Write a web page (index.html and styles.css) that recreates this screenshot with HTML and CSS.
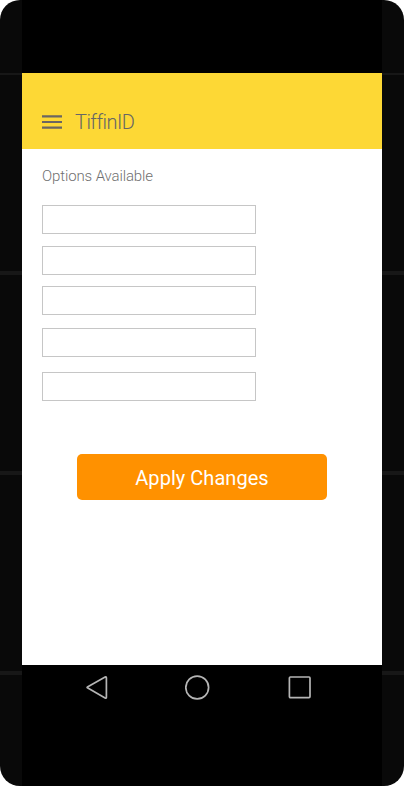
FILE: index.html
```html
<!DOCTYPE html>
<html lang="en">
<head>
<meta charset="utf-8">
<title>TiffinID</title>
<link rel="stylesheet" href="styles.css">
</head>
<body>
<div class="phone">
  <div class="display">
    <main class="screen">
      <header class="app-bar">
        <svg class="menu" width="20" height="14" viewBox="0 0 20 14"><path d="M0 1.4h20M0 7h20M0 12.6h20" stroke="#6b6662" stroke-width="2.2"/></svg>
        <h1 class="title">TiffinID</h1>
      </header>
      <form class="options">
        <h2 class="label">Options Available</h2>
        <input class="field" type="text">
        <input class="field" type="text">
        <input class="field" type="text">
        <input class="field field-fourth" type="text">
        <input class="field field-last" type="text">
        <button class="apply" type="button">Apply Changes</button>
      </form>
    </main>
    <nav class="nav">
      <svg width="24" height="28" viewBox="0 0 24 28"><path d="M2.4 13.1 20.1 3Q21.4 2.5 21.4 4V23.2Q21.4 24.6 20.1 24L2.4 13.8Q1.8 13.4 2.4 13.1Z"/></svg>
      <svg width="26" height="28" viewBox="0 0 26 28"><circle cx="12.2" cy="13.5" r="11.4"/></svg>
      <svg width="24" height="28" viewBox="0 0 24 28"><rect x="2.4" y="3" width="20.6" height="20.6" rx="1"/></svg>
    </nav>
  </div>
</div>
</body>
</html>
```
FILE: styles.css
```css
* { box-sizing: border-box; }
body {
  margin: 0;
  background: #fff;
  font-family: Roboto, sans-serif;
}
.phone {
  width: 404px;
  height: 786px;
  padding: 0 22px;
  border-radius: 20px;
  overflow: hidden;
  background:
    linear-gradient(#171717, #171717) 0 73px / 100% 2px no-repeat,
    linear-gradient(#171717, #171717) 0 271px / 100% 4px no-repeat,
    linear-gradient(#171717, #171717) 0 471px / 100% 4px no-repeat,
    linear-gradient(#171717, #171717) 0 671px / 100% 4px no-repeat,
    #090909;
}
.display {
  height: 100%;
  padding-top: 73px;
  background: #000;
}
.screen {
  height: 592px;
  background: #fff;
}
.app-bar {
  display: flex;
  align-items: center;
  gap: 13px;
  height: 76px;
  padding: 22px 20px 0;
  background: #fdd835;
}
.menu { display: block; }
.title {
  margin: 0;
  font-size: 20px;
  font-weight: 300;
  line-height: 24px;
  letter-spacing: -0.55px;
  color: #666;
}
.options {
  display: flex;
  flex-direction: column;
  align-items: flex-start;
  padding: 17px 20px 0;
}
.label {
  margin: 0 0 19px;
  font-size: 15px;
  font-weight: 300;
  line-height: 20px;
  letter-spacing: -0.12px;
  color: #707070;
}
.field {
  width: 214px;
  height: 29px;
  margin: 0 0 12px;
  padding: 0 8px;
  border: 1px solid #c6c6c6;
  border-radius: 0;
  background: #fff;
}
.field:nth-of-type(2) { margin-bottom: 11px; }
.field:nth-of-type(3) { margin-bottom: 13px; }
.field-fourth { margin-bottom: 15px; }
.field-last { margin-bottom: 53px; }
.apply {
  align-self: center;
  width: 250px;
  height: 46px;
  padding: 2px 0 0;
  border: 0;
  border-radius: 5px;
  background: #ff9100;
  color: #fff;
  font: 400 20px/24px Roboto, sans-serif;
  letter-spacing: 0.04px;
}
.nav {
  display: flex;
  justify-content: space-between;
  padding: 9px 71px 0 63px;
  fill: none;
  stroke: #b5b5b5;
  stroke-width: 1.7;
}
```
